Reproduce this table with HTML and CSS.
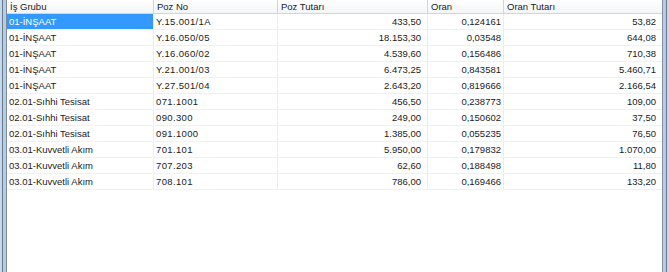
FILE: index.html
```html
<!DOCTYPE html>
<html lang="tr">
<head>
<meta charset="utf-8">
<title>Oran</title>
<link rel="stylesheet" href="styles.css">
</head>
<body>
<div class="window">
  <div class="frame frame-left"></div>
  <div class="grid">
    <div class="row head">
      <div class="c c1">İş Grubu</div>
      <div class="c c2">Poz No</div>
      <div class="c c3">Poz Tutarı</div>
      <div class="c c4">Oran</div>
      <div class="c c5">Oran Tutarı</div>
    </div>
    <div class="row"><div class="c c1 sel">01-İNŞAAT</div><div class="c c2">Y.15.001/1A</div><div class="c c3 num">433,50</div><div class="c c4 num">0,124161</div><div class="c c5 num">53,82</div></div>
    <div class="row"><div class="c c1">01-İNŞAAT</div><div class="c c2">Y.16.050/05</div><div class="c c3 num">18.153,30</div><div class="c c4 num">0,03548</div><div class="c c5 num">644,08</div></div>
    <div class="row"><div class="c c1">01-İNŞAAT</div><div class="c c2">Y.16.060/02</div><div class="c c3 num">4.539,60</div><div class="c c4 num">0,156486</div><div class="c c5 num">710,38</div></div>
    <div class="row"><div class="c c1">01-İNŞAAT</div><div class="c c2">Y.21.001/03</div><div class="c c3 num">6.473,25</div><div class="c c4 num">0,843581</div><div class="c c5 num">5.460,71</div></div>
    <div class="row"><div class="c c1">01-İNŞAAT</div><div class="c c2">Y.27.501/04</div><div class="c c3 num">2.643,20</div><div class="c c4 num">0,819666</div><div class="c c5 num">2.166,54</div></div>
    <div class="row"><div class="c c1">02.01-Sıhhi Tesisat</div><div class="c c2">071.1001</div><div class="c c3 num">456,50</div><div class="c c4 num">0,238773</div><div class="c c5 num">109,00</div></div>
    <div class="row"><div class="c c1">02.01-Sıhhi Tesisat</div><div class="c c2">090.300</div><div class="c c3 num">249,00</div><div class="c c4 num">0,150602</div><div class="c c5 num">37,50</div></div>
    <div class="row"><div class="c c1">02.01-Sıhhi Tesisat</div><div class="c c2">091.1000</div><div class="c c3 num">1.385,00</div><div class="c c4 num">0,055235</div><div class="c c5 num">76,50</div></div>
    <div class="row"><div class="c c1">03.01-Kuvvetli Akım</div><div class="c c2">701.101</div><div class="c c3 num">5.950,00</div><div class="c c4 num">0,179832</div><div class="c c5 num">1.070,00</div></div>
    <div class="row"><div class="c c1">03.01-Kuvvetli Akım</div><div class="c c2">707.203</div><div class="c c3 num">62,60</div><div class="c c4 num">0,188498</div><div class="c c5 num">11,80</div></div>
    <div class="row"><div class="c c1">03.01-Kuvvetli Akım</div><div class="c c2">708.101</div><div class="c c3 num">786,00</div><div class="c c4 num">0,169466</div><div class="c c5 num">133,20</div></div>
  </div>
  <div class="frame frame-right"></div>
</div>
</body>
</html>
```

FILE: styles.css
```css
html, body {
  margin: 0;
  padding: 0;
  background: #ffffff;
}

.window {
  display: flex;
  width: 669px;
  height: 272px;
  overflow: hidden;
}

.frame {
  width: 7px;
  flex: none;
}

.frame-left {
  background: linear-gradient(to right,
    #c4d8ee 0, #c4d8ee 2px,
    #6c7a8c 2px, #6c7a8c 3px,
    #b4cce6 3px, #b4cce6 6px,
    #7d8a9a 6px, #7d8a9a 7px);
}

.frame-right {
  background: linear-gradient(to right,
    #8592a3 0, #8592a3 1px,
    #b4cce6 1px, #b4cce6 4px,
    #6c7a8c 4px, #6c7a8c 5px,
    #c4d8ee 5px, #c4d8ee 7px);
}

.grid {
  width: 655px;
  flex: none;
  display: flex;
  flex-direction: column;
  font-family: "Liberation Sans", Arial, sans-serif;
  font-size: 9.5px;
  color: #1a1a1a;
}

.row {
  display: flex;
  height: 16px;
  border-bottom: 1px solid #f0f0f0;
  box-sizing: border-box;
}

.row.head {
  height: 14px;
  background: linear-gradient(#ffffff, #f4f5f7);
  border-bottom: 1px solid #d5d5d5;
}

.c {
  box-sizing: border-box;
  border-right: 1px solid #ececec;
  padding: 0 2px;
  line-height: 15px;
  white-space: nowrap;
  overflow: hidden;
}

.c2 { letter-spacing: 0.35px; }

.head .c {
  line-height: 14px;
  border-right-color: #d5d5d5;
  padding-left: 3px;
  letter-spacing: 0;
}

.c1 { width: 147px; }
.c2 { width: 124px; }
.c3 { width: 150px; }
.c4 { width: 76px; }
.c5 { width: 158px; border-right: none; }

.num { text-align: right; }
.c3.num { padding-right: 6px; }
.c4.num { padding-right: 2px; }
.c5.num { padding-right: 6px; }

.sel {
  background: #3399ff;
  color: #ffffff;
}
```
